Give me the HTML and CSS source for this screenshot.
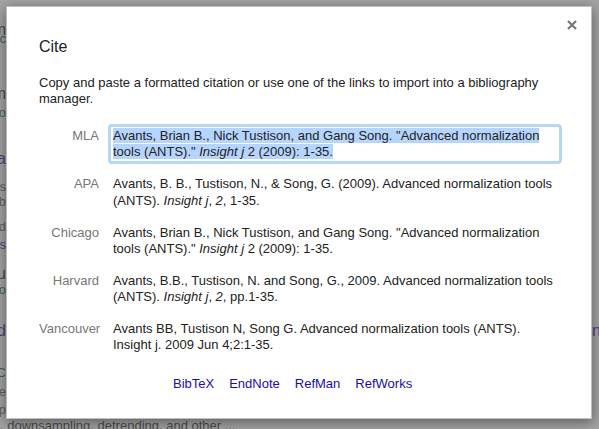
FILE: index.html
```html
<!DOCTYPE html>
<html>
<head>
<meta charset="utf-8">
<title>Cite</title>
<link rel="stylesheet" href="styles.css">
</head>
<body>
<div class="page">
  <div class="bl big dk b1">Advanced normalization algorithm</div>
  <div class="bl gr b2">insight-journal.org, 2009 - Springer, inc</div>
  <div class="bl big dk b3">Symmetric diffeomorphic program</div>
  <div class="bl gr b4">BB Avants - Medical image analysis, 2008 - Elsevier.co</div>
  <div class="bl big bu b5">Evaluation of registration tools: ANTS a</div>
  <div class="bl gy b6">We present a comparison of registration methods ns</div>
  <div class="bl gy b7">intensity and labels in a probab</div>
  <div class="bl gy b8">for brain mapping and</div>
  <div class="bl bu b9">Cited by 1520 Related articles All 19 versions</div>
  <div class="bl big dk b10">Template construction with nu</div>
  <div class="bl gr b11">NJ Tustison, BB Avants - Frontiers in neuroinformatics, 2013 - fro</div>
  <div class="blrow big bu b12"><span class="lf">ANTs and Árboles: a toolkit for image analysis and</span><span class="rt">normalization</span></div>
  <div class="bl gr b13">CA Cook - Neuroimage, 2014 - ANTs is a coherent C</div>
  <div class="bl gy b14">toolkit for brain image processing; we describe the pipeline and se</div>
  <div class="bl gy b15">Methods include bias correction, tissue segmentation, resamp</div>
  <div class="snip b16">, downsampling, detrending, and other ...</div>
</div>
<div class="overlay"></div>
<div class="dialog">
  <button class="close" aria-label="Close"><svg width="10" height="10" viewBox="0 0 10 10"><path d="M1 1L9 9M9 1L1 9" stroke="#777" stroke-width="2.2"/></svg></button>
  <h2 class="title">Cite</h2>
  <p class="desc">Copy and paste a formatted citation or use one of the links to import into a bibliography manager.</p>
  <div class="cites">
    <div class="lbl">MLA</div>
    <div class="cell"><div class="citr focus"><span class="sel">Avants, Brian B., Nick Tustison, and Gang Song. "Advanced normalization tools (ANTS)." <i>Insight j</i> 2 (2009): 1-35.</span></div></div>
    <div class="lbl">APA</div>
    <div class="cell"><div class="citr">Avants, B. B., Tustison, N., &amp; Song, G. (2009). Advanced normalization tools (ANTS). <i>Insight j</i>, <i>2</i>, 1-35.</div></div>
    <div class="lbl">Chicago</div>
    <div class="cell"><div class="citr">Avants, Brian B., Nick Tustison, and Gang Song. "Advanced normalization tools (ANTS)." <i>Insight j</i> 2 (2009): 1-35.</div></div>
    <div class="lbl">Harvard</div>
    <div class="cell"><div class="citr">Avants, B.B., Tustison, N. and Song, G., 2009. Advanced normalization tools (ANTS). <i>Insight j</i>, <i>2</i>, pp.1-35.</div></div>
    <div class="lbl">Vancouver</div>
    <div class="cell"><div class="citr">Avants BB, Tustison N, Song G. Advanced normalization tools (ANTS). Insight j. 2009 Jun 4;2:1-35.</div></div>
  </div>
  <div class="links">
    <a href="#">BibTeX</a>
    <a href="#">EndNote</a>
    <a href="#">RefMan</a>
    <a href="#">RefWorks</a>
  </div>
</div>
</body>
</html>
```
FILE: styles.css
```css
* { box-sizing: border-box; }
html, body { margin: 0; padding: 0; }
body {
  width: 599px;
  height: 429px;
  overflow: hidden;
  position: relative;
  background: #fff;
  font-family: "Liberation Sans", Arial, sans-serif;
  color: #222;
}

/* page underneath the dialog */
.page { font-size: 13px; }
.bl {
  display: flex;
  justify-content: flex-end;
  width: 6px;
  line-height: 0;
  white-space: nowrap;
}
.blrow {
  display: flex;
  line-height: 0;
  white-space: nowrap;
}
.blrow .lf {
  display: flex;
  justify-content: flex-end;
  width: 6px;
  flex: none;
}
.blrow .rt { margin-left: 586px; flex: none; }
.big { font-size: 16px; }
.dk { color: #222; }
.gr { color: #006621; }
.bu { color: #1a0dab; }
.gy { color: #545454; }
.snip { line-height: 0; white-space: nowrap; color: #222; }

.b1 { padding-top: 29.5px; }
.b2 { padding-top: 9.3px; }
.b3 { padding-top: 55.7px; }
.b4 { padding-top: 19px; }
.b5 { padding-top: 46px; }
.b6 { padding-top: 28px; }
.b7 { padding-top: 15px; }
.b8 { padding-top: 25px; }
.b9 { padding-top: 18px; }
.b10 { padding-top: 29px; }
.b11 { padding-top: 16px; }
.b12 { padding-top: 41px; }
.b13 { padding-top: 42px; }
.b14 { padding-top: 19px; }
.b15 { padding-top: 18px; }
.b16 { padding-top: 15.5px; }

.overlay {
  position: absolute;
  inset: 0;
  background: rgba(102, 102, 102, 0.6);
}

/* dialog */
.dialog {
  position: absolute;
  left: 6px;
  top: 6px;
  width: 586px;
  height: 413px;
  background: #fff;
  border: 1px solid rgba(0, 0, 0, 0.25);
  box-shadow: 0 3px 12px rgba(0, 0, 0, 0.45);
  padding: 30px 24px 0 32px;
}
.close {
  position: absolute;
  top: 13px;
  right: 14px;
  width: 10px;
  height: 10px;
  padding: 0;
  border: 0;
  background: none;
  display: block;
  cursor: pointer;
}
.close svg { display: block; }
.title {
  margin: 0;
  font-size: 16px;
  line-height: 20px;
  font-weight: normal;
  color: #222;
}
.desc {
  margin: 18px 0 0;
  font-size: 13px;
  line-height: 1.24;
}
.cites {
  margin-top: 13px;
  display: grid;
  grid-template-columns: 60px 454px;
  column-gap: 9px;
  font-size: 13px;
  line-height: 1.24;
}
.lbl {
  padding-top: 8px;
  text-align: right;
  color: #777;
}
.cell { padding: 4px 0; }
.citr {
  border: 3px solid transparent;
  border-radius: 4px;
  padding: 1px 2px;
}
.citr.focus { border-color: #b6d6f7; }
.sel { background: #b5d5fd; }
.links {
  margin-top: 15px;
  padding-left: 134px;
  display: flex;
  gap: 15px;
  font-size: 13px;
  line-height: 1.24;
}
.links a { color: #1a0dab; text-decoration: none; }
```
